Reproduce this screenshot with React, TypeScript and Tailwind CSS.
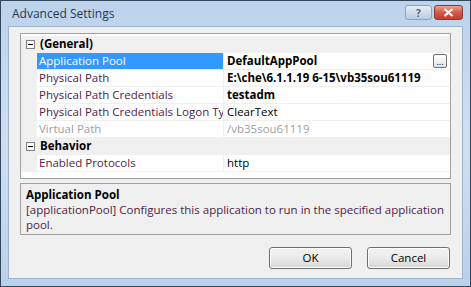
const font = { fontFamily: '"Open Sans", "Noto Sans", sans-serif' };

type Row =
  | { kind: 'cat'; label: string }
  | { kind: 'prop'; name: string; value: string; bold?: boolean; selected?: boolean; disabled?: boolean; button?: boolean };

const rows: Row[] = [
  { kind: 'cat', label: '(General)' },
  { kind: 'prop', name: 'Application Pool', value: 'DefaultAppPool', bold: true, selected: true, button: true },
  { kind: 'prop', name: 'Physical Path', value: 'E:\\che\\6.1.1.19 6-15\\vb35sou61119', bold: true },
  { kind: 'prop', name: 'Physical Path Credentials', value: 'testadm', bold: true },
  { kind: 'prop', name: 'Physical Path Credentials Logon Type', value: 'ClearText' },
  { kind: 'prop', name: 'Virtual Path', value: '/vb35sou61119', disabled: true },
  { kind: 'cat', label: 'Behavior' },
  { kind: 'prop', name: 'Enabled Protocols', value: 'http' },
];

function Minus() {
  return (
    <div className="flex h-[9px] w-[9px] items-center justify-center border border-[#808080] bg-white">
      <div className="h-px w-[5px] bg-black" />
    </div>
  );
}

export default function App() {
  return (
    <div
      className="flex h-[287px] w-[471px] flex-col border border-[#34465c] bg-gradient-to-b from-[#bcd3ec] via-[#cfdff1] to-[#b9d1ea] text-[11.5px]"
      style={font}
    >
      {/* Title bar */}
      <div className="flex h-[25px] shrink-0 items-center justify-between pl-[11px] pr-[7px]">
        <span className="text-[12px] text-[#1e3957]">Advanced Settings</span>
        <div className="flex items-start gap-[2px] self-start pt-[4px]">
          <div className="flex h-[15px] w-[27px] items-center justify-center rounded-[3px] border border-[#8aa3c0] bg-gradient-to-b from-[#e6eef7] to-[#bccbdd] text-[10px] font-bold leading-none text-[#4d6785]">
            ?
          </div>
          <div className="flex h-[15px] w-[29px] items-center justify-center rounded-[3px] border border-[#8b3a33] bg-gradient-to-b from-[#e8a493] via-[#d0584a] to-[#c23f30]">
            <svg width="11" height="9" viewBox="0 0 11 9">
              <path d="M1.5 1 L9.5 8 M9.5 1 L1.5 8" stroke="white" strokeWidth="2.2" />
            </svg>
          </div>
        </div>
      </div>

      {/* Client area */}
      <div className="mx-[7px] mb-[7px] flex flex-1 flex-col border border-[#9fb3c9] bg-[#f0f0f0] px-[11px] pt-[6px] text-[#4d2447]">
        {/* Property grid */}
        <div className="flex h-[146px] flex-col border border-[#a0a0a0] bg-white pt-[2px]">
          {rows.map((r, i) =>
            r.kind === 'cat' ? (
              <div key={i} className="flex h-[17px] items-center border-b border-[#f0f0f0] bg-[#f0f0f0]">
                <div className="flex w-[16px] justify-center pl-[2px]">
                  <Minus />
                </div>
                <span className="pl-[3px] font-bold text-black">{r.label}</span>
              </div>
            ) : (
              <div key={i} className="flex h-[17px] border-b border-[#f0f0f0]">
                <div className="w-[16px] shrink-0 bg-[#f0f0f0]" />
                <div
                  className={
                    'flex w-[186px] shrink-0 items-center overflow-hidden whitespace-nowrap pl-[2px] ' +
                    (r.selected ? 'bg-[#3399ff] text-white' : r.disabled ? 'text-[#a0a0a0]' : '')
                  }
                >
                  {r.name}
                </div>
                <div className="w-px shrink-0 bg-[#f0f0f0]" />
                <div
                  className={
                    'flex flex-1 items-center justify-between pl-[3px] pr-[3px] ' +
                    (r.bold ? 'font-bold text-black ' : '') +
                    (r.disabled ? 'text-[#a0a0a0]' : r.bold ? '' : 'text-black')
                  }
                >
                  <span className="whitespace-nowrap">{r.value}</span>
                  {r.button && (
                    <div className="flex h-[14px] w-[14px] items-center justify-center rounded-[2px] border border-[#707070] bg-gradient-to-b from-white to-[#e3e3e3] text-[9px] font-normal leading-none text-black">
                      ...
                    </div>
                  )}
                </div>
              </div>
            )
          )}
        </div>

        {/* Description */}
        <div className="mt-[4px] h-[52px] border border-[#a0a0a0] bg-[#f0f0f0] px-[5px] pt-[3px] leading-[15px]">
          <div className="font-bold text-black">Application Pool</div>
          <div>[applicationPool] Configures this application to run in the specified application pool.</div>
        </div>

        {/* Buttons */}
        <div className="mt-[12px] flex justify-end gap-[15px] pr-px">
          <button className="h-[22px] w-[83px] rounded-[3px] border border-[#707070] bg-gradient-to-b from-[#f2f2f2] via-[#ebebeb] to-[#d6d6d6] text-black shadow-[inset_0_0_0_1px_#fcfcfc]">
            OK
          </button>
          <button className="h-[22px] w-[83px] rounded-[3px] border border-[#707070] bg-gradient-to-b from-[#f2f2f2] via-[#ebebeb] to-[#d6d6d6] text-black shadow-[inset_0_0_0_1px_#fcfcfc]">
            Cancel
          </button>
        </div>
      </div>
    </div>
  );
}
